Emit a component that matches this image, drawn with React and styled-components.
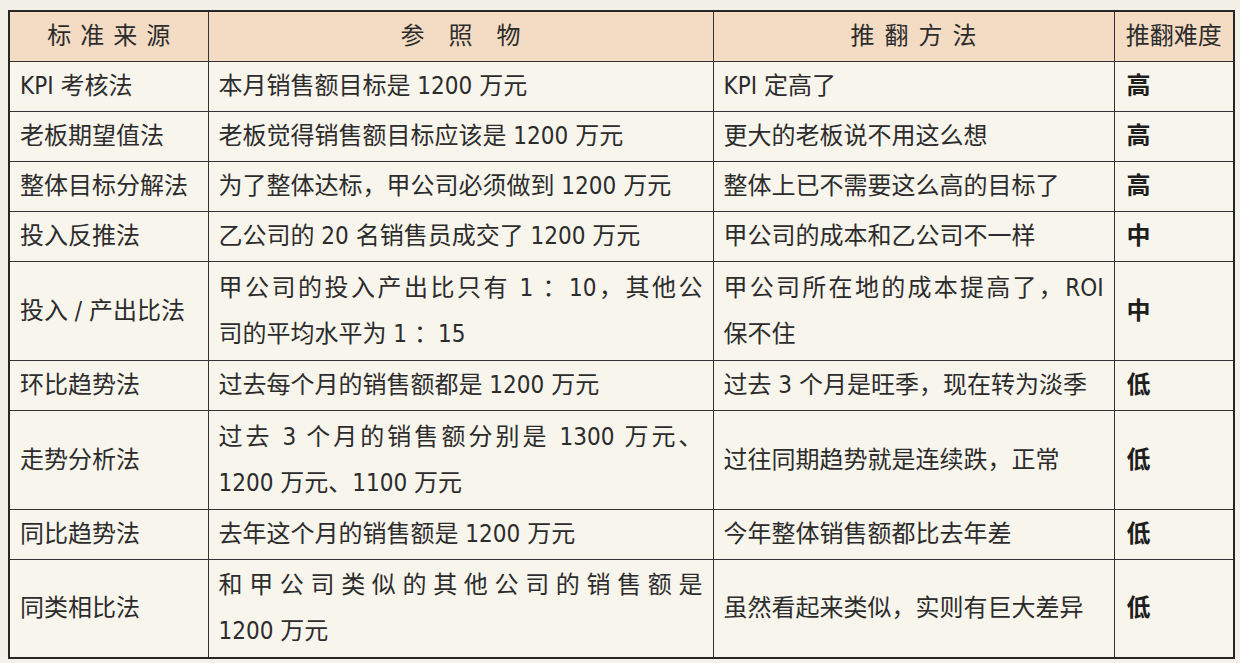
import React from 'react'
import styled, { createGlobalStyle } from 'styled-components'

const GlobalStyle = createGlobalStyle`
	html, body {
		margin: 0;
		padding: 0;
		background: #f3f0e7;
	}
	body {
		font-family: 'Liberation Sans Narrow', 'DejaVu Sans Condensed', 'DejaVu Sans', 'Noto Sans CJK SC', sans-serif;
		font-stretch: condensed;
		color: #2c2c2c;
	}
`
const Page = styled.div`
	width: 1240px;
	height: 663px;
	padding: 10px 7px 0 8px;
	box-sizing: border-box;
	overflow: hidden;
`
const Table = styled.table`
	width: 1225px;
	border-collapse: collapse;
	table-layout: fixed;
	border: 2.5px solid #262626;
	background: #f8f5ed;
	font-size: 24px;
`
const Row = styled.tr`
	height: ${(p) => p.$h}px;
`
const HeadCell = styled.th`
	background: #f3dcc3;
	border: 1.5px solid #333;
	font-weight: 400;
	text-align: center;
	letter-spacing: ${(p) => p.$spacing || 0}px;
	padding: 0 0 0 ${(p) => p.$spacing || 0}px;
	line-height: 1;
`
const Cell = styled.td`
	border: 1.5px solid #333;
	padding: 0 ${(p) => (p.$pad != null ? p.$pad : 10)}px;
	vertical-align: middle;
	line-height: 46px;
	white-space: nowrap;
	font-weight: ${(p) => (p.$strong ? 700 : 400)};
	color: ${(p) => (p.$strong ? '#1e1e1e' : '#2c2c2c')};
`
const Line = styled.div`
	text-align: ${(p) => (p.$spread ? 'justify' : 'left')};
	text-align-last: ${(p) => (p.$spread ? 'justify' : 'left')};
	text-justify: inter-character;
`

const rows = [
	{ name: 'KPI 考核法', refer: ['本月销售额目标是 1200 万元'], method: ['KPI 定高了'], level: '高' },
	{ name: '老板期望值法', refer: ['老板觉得销售额目标应该是 1200 万元'], method: ['更大的老板说不用这么想'], level: '高' },
	{ name: '整体目标分解法', refer: ['为了整体达标，甲公司必须做到 1200 万元'], method: ['整体上已不需要这么高的目标了'], level: '高' },
	{ name: '投入反推法', refer: ['乙公司的 20 名销售员成交了 1200 万元'], method: ['甲公司的成本和乙公司不一样'], level: '中' },
	{
		name: '投入 / 产出比法',
		refer: ['甲公司的投入产出比只有 1 ：10，其他公', '司的平均水平为 1 ：15'],
		method: ['甲公司所在地的成本提高了，ROI', '保不住'],
		level: '中',
	},
	{ name: '环比趋势法', refer: ['过去每个月的销售额都是 1200 万元'], method: ['过去 3 个月是旺季，现在转为淡季'], level: '低' },
	{
		name: '走势分析法',
		refer: ['过去 3 个月的销售额分别是 1300 万元、', '1200 万元、1100 万元'],
		method: ['过往同期趋势就是连续跌，正常'],
		level: '低',
	},
	{ name: '同比趋势法', refer: ['去年这个月的销售额是 1200 万元'], method: ['今年整体销售额都比去年差'], level: '低' },
	{
		name: '同类相比法',
		refer: ['和甲公司类似的其他公司的销售额是', '1200 万元'],
		method: ['虽然看起来类似，实则有巨大差异'],
		level: '低',
	},
]

const Lines = ({ lines }) =>
	lines.map((text, i) => (
		<Line key={i} $spread={lines.length > 1 && i < lines.length - 1}>
			{text}
		</Line>
	))

const App = () => {
	return (
		<Page>
			<GlobalStyle />
			<Table>
				<colgroup>
					<col style={{ width: 199 }} />
					<col style={{ width: 505 }} />
					<col style={{ width: 401 }} />
					<col style={{ width: 120 }} />
				</colgroup>
				<thead>
					<Row $h={50}>
						<HeadCell $spacing={9}>标准来源</HeadCell>
						<HeadCell $spacing={24}>参照物</HeadCell>
						<HeadCell $spacing={10}>推翻方法</HeadCell>
						<HeadCell>推翻难度</HeadCell>
					</Row>
				</thead>
				<tbody>
					{rows.map((r) => {
						const tall = r.refer.length > 1 || r.method.length > 1
						return (
							<Row key={r.name} $h={tall ? 99 : 50}>
								<Cell>{r.name}</Cell>
								<Cell>
									<Lines lines={r.refer} />
								</Cell>
								<Cell>
									<Lines lines={r.method} />
								</Cell>
								<Cell $pad={12} $strong>
									{r.level}
								</Cell>
							</Row>
						)
					})}
				</tbody>
			</Table>
		</Page>
	)
}

export default App
